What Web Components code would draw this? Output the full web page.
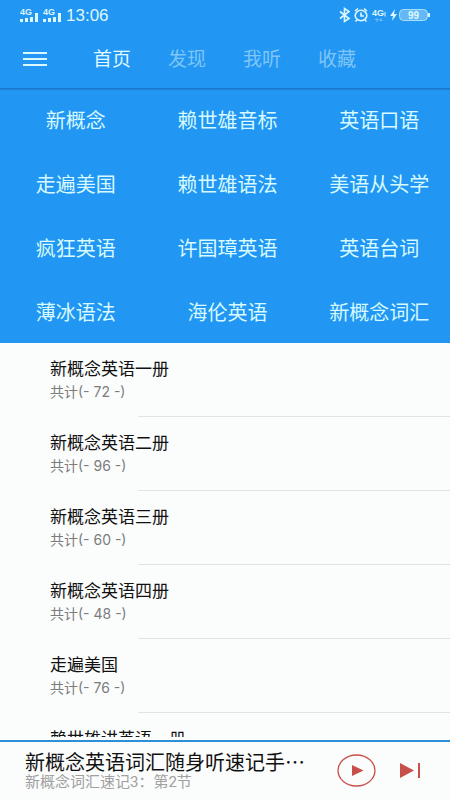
<!DOCTYPE html>
<html lang="zh-CN">
<head>
<meta charset="utf-8">
<meta name="viewport" content="width=device-width, initial-scale=1">
<title>首页</title>
<style>
  html, body { margin: 0; height: 100%; }
  body { font-family: Roboto, "Noto Sans CJK SC", sans-serif; background: #fbfcfc; }
</style>
</head>
<body>
<listening-app></listening-app>
<script>
const define = (name, html, setup) => customElements.define(name, class extends HTMLElement {
  constructor() {
    super();
    const t = document.createElement('template');
    t.innerHTML = html;
    this.attachShadow({ mode: 'open' }).append(t.content.cloneNode(true));
  }
  connectedCallback() { if (setup) setup.call(this, this.shadowRoot); }
});

define('signal-icon', `
<style>:host{display:block} svg{display:block} text{font:bold 9px "Liberation Sans",sans-serif}</style>
<svg width="19" height="15" viewBox="0 0 19 15" fill="currentColor">
  <text x="0" y="7">4G</text>
  <path d="M0 11h3v3H0zM5 10h3v4H5zM10 9h3v5h-3zM15 5h3v9h-3z"/>
</svg>`);

define('status-bar', `
<style>
  :host{display:flex;align-items:center;height:30px;padding:0 19px 0 20px;color:#dcf8ff}
  .signals{display:flex;gap:4px}
  time{font:17px/20px "Liberation Sans",sans-serif;margin-left:4px;padding-top:2px}
  .right{display:flex;align-items:center;margin-left:auto}
  svg{display:block}
  text{font-family:"Liberation Sans",sans-serif;font-weight:bold}
</style>
<div class="signals"><signal-icon></signal-icon><signal-icon></signal-icon></div>
<time>13:06</time>
<div class="right">
  <svg width="92" height="16" viewBox="0 0 92 16" fill="none" stroke="currentColor">
    <path stroke-width="1.6" d="M1 4.500L10 11.500L5.500 14.500V1.500L10 4.500L1 11.500"/>
    <ellipse cx="22" cy="8.500" rx="5.800" ry="5.200" stroke-width="1.600"/>
    <path stroke-width="1.600" d="M22 5.500V9h3M16 4l3-2.500M25 1.500l3 2.500M18 13l-1.500 1.500M26 13l1.500 1.500"/>
    <g fill="currentColor" stroke="none">
      <text x="33" y="9" font-size="9">4G</text>
      <path d="M46.500 4.500v5h-1v-4z"/>
      <path opacity=".4" d="M36 12h4v1h-4zM37.500 11h1v4h-1zM42 11l2 3h-4z"/>
      <path d="M56 2l-5 7h3l-1 5 5-7h-3z"/>
    </g>
    <rect x="60.500" y="2.500" width="28" height="11" rx="4" fill="#8bcbf8" fill-opacity=".65" stroke="#a9def9"/>
    <path d="M90 6v4" stroke-width="2"/>
    <text x="74.500" y="11.500" text-anchor="middle" font-size="10" fill="currentColor" stroke="none">99</text>
  </svg>
</div>`);

define('tab-bar', `
<style>
  :host{display:flex;align-items:center;height:59px;padding-left:23px;box-sizing:border-box;
    border-bottom:1px solid #1a76c4;box-shadow:0 1px 1px #1e86dc;position:relative}
  button{border:0;background:none;padding:0;margin:0 46px 0 0;width:24px;color:#dcf8ff}
  svg{display:block}
  nav{display:flex;gap:37px;padding-top:2px}
  ::slotted(a){font-size:19px;line-height:28px;color:#7fc6f7;text-decoration:none;white-space:nowrap}
  ::slotted(a[aria-current]){color:#e0fbff}
</style>
<button aria-label="菜单"><svg width="24" height="15" viewBox="0 0 24 15" fill="currentColor"><path d="M0 0h24v2H0zM0 6h24v2H0zM0 12h24v2H0z"/></svg></button>
<nav><slot></slot></nav>`);

define('category-grid', `
<style>
  :host{display:block;overflow:hidden;height:254px;flex:none}
  div{display:grid;grid-template-columns:repeat(3,1fr);grid-auto-rows:64px;width:calc(100% + 5px)}
  ::slotted(a){display:flex;align-items:center;justify-content:center;font-size:20px;line-height:28px;
    color:#d6faff;text-decoration:none;white-space:nowrap}
</style>
<div><slot></slot></div>`);

define('course-item', `
<style>
  :host{display:block;height:74px;box-sizing:border-box;padding:14px 0 0 50px}
  .t{font-size:17px;line-height:24px;color:#111}
  .s{font-family:Inter,"Noto Sans CJK SC",sans-serif;font-size:14px;line-height:20px;margin-top:1px;color:#7c7c7c}
  hr{margin:14px 0 0 88px;border:0;height:1px;background:#e2e4e4}
</style>
<div class="t"><slot></slot></div>
<div class="s"><slot name="count"></slot></div>
<hr>`);

define('player-bar', `
<style>
  :host{display:flex;flex:none;align-items:center;height:60px;box-sizing:border-box;border-top:2px solid #2f8fd6;
    padding:0 29px 2px 25px;background:#fbfcfc}
  .text{flex:1;min-width:0}
  .t{font-family:"Noto Sans CJK SC",sans-serif;font-size:20px;line-height:24px;color:#111;white-space:nowrap;overflow:hidden}
  .s{font-size:15px;line-height:16px;color:#a0a0a0;white-space:nowrap}
  button{border:0;background:none;padding:0;color:#c8504b;flex:none}
  .play{margin-left:31px}
  .next{margin-left:24px}
  svg{display:block}
</style>
<div class="text">
  <div class="t"><slot></slot></div>
  <div class="s"><slot name="section"></slot></div>
</div>
<button class="play" aria-label="播放"><svg width="39" height="33" viewBox="0 0 39 33">
  <ellipse cx="19.500" cy="16.500" rx="18.500" ry="15.500" fill="none" stroke="currentColor" stroke-width="1.300"/>
  <path d="M15 11l11.500 5.500L15 22z" fill="currentColor"/></svg></button>
<button class="next" aria-label="下一首"><svg width="21" height="17" viewBox="0 0 21 17" fill="currentColor">
  <path d="M0 1l14 7.500L0 16zM18 1h2v15h-2z"/></svg></button>`);

define('listening-app', `
<style>
  :host{display:flex;flex-direction:column;height:100vh;overflow:hidden}
  header{background:#2296f3;flex:none}
  main{flex:1;min-height:0;overflow:hidden;margin-bottom:3px}
</style>
<header>
  <status-bar></status-bar>
  <tab-bar>
    <a href="#home" aria-current="page">首页</a><a href="#find">发现</a><a href="#listen">我听</a><a href="#fav">收藏</a>
  </tab-bar>
  <category-grid></category-grid>
</header>
<main></main>
<player-bar>新概念英语词汇随身听速记手…<span slot="section">新概念词汇速记3：第2节</span></player-bar>`,
function (root) {
  const grid = root.querySelector('category-grid');
  for (const name of ['新概念','赖世雄音标','英语口语','走遍美国','赖世雄语法','美语从头学','疯狂英语','许国璋英语','英语台词','薄冰语法','海伦英语','新概念词汇']) {
    const a = document.createElement('a');
    a.href = '#' + name;
    a.textContent = name;
    grid.append(a);
  }
  const main = root.querySelector('main');
  for (const [title, n] of [['新概念英语一册',72],['新概念英语二册',96],['新概念英语三册',60],['新概念英语四册',48],['走遍美国',76],['赖世雄讲英语一册','']]) {
    const item = document.createElement('course-item');
    item.textContent = title;
    if (n) {
      const c = document.createElement('span');
      c.slot = 'count';
      c.textContent = `共计(- ${n} -)`;
      item.append(c);
    }
    main.append(item);
  }
});
</script>
</body>
</html>
